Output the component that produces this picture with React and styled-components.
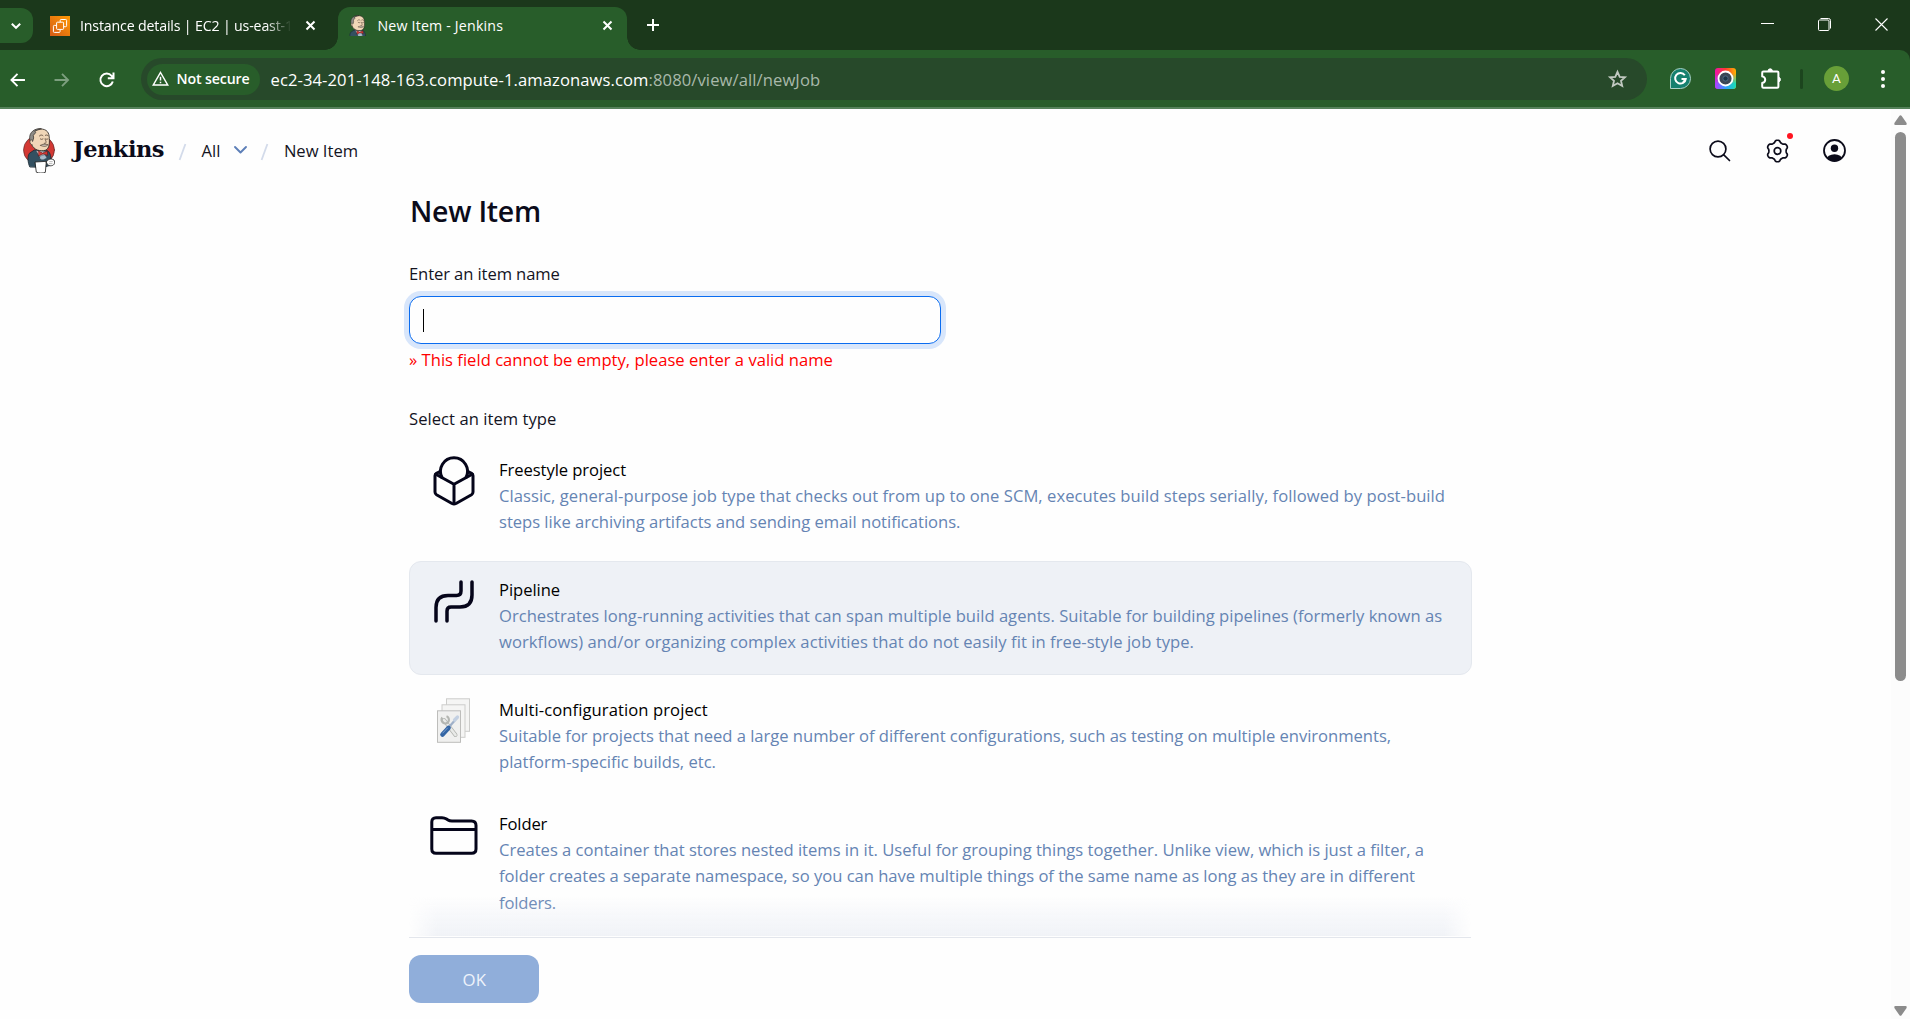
import React from "react";
import styled, { createGlobalStyle } from "styled-components";

const ink = "#14141f";
const Global = createGlobalStyle`
  * { box-sizing: border-box; }
  body { margin: 0; background: #fefefe; overflow: hidden; font-family: "Open Sans", "Noto Sans", sans-serif; }
  svg { display: block; flex: none; overflow: visible; }
`;

const Window = styled.div`
  display: flex;
  flex-direction: column;
  width: 1910px;
  height: 1019px;
  overflow: hidden;
  background: #1b381b;
`;

/* ---------- browser chrome ---------- */
const TabStrip = styled.div`
  display: flex;
  height: 50px;
  background: #1b381b;
  color: #fff;
`;
const TabSearch = styled.div`
  display: flex;
  align-items: center;
  justify-content: center;
  width: 33px;
  height: 35px;
  margin-top: 8px;
  padding-right: 2px;
  border-radius: 0 12px 12px 0;
  background: #285d2a;
`;
const Tab = styled.div`
  position: relative;
  display: flex;
  align-items: center;
  width: ${(p) => p.$w}px;
  margin-left: ${(p) => p.$ml}px;
  margin-top: 7px;
  padding: 0 ${(p) => p.$pr}px 6px ${(p) => p.$pl}px;
  border-radius: 12px 12px 0 0;
  background: ${(p) => (p.$active ? "#285d2a" : "transparent")};
  &::before, &::after {
    content: "";
    display: ${(p) => (p.$active ? "block" : "none")};
    position: absolute;
    bottom: 0;
    width: 13px;
    height: 13px;
  }
  &::before { left: -13px; background: radial-gradient(circle at 0 0, transparent 12.5px, #285d2a 13px); }
  &::after { right: -13px; background: radial-gradient(circle at 100% 0, transparent 12.5px, #285d2a 13px); }
`;
const TabTitle = styled.span`
  flex: 1;
  margin-left: ${(p) => p.$ml}px;
  margin-right: 10px;
  white-space: nowrap;
  font-size: 14.2px;
  line-height: 22px;
  letter-spacing: ${(p) => p.$ls}px;
  mask-image: ${(p) => (p.$fade ? "linear-gradient(to right, #000 86%, transparent 98%)" : "none")};
`;
const NewTab = styled.div`
  margin: 19px 0 0 20px;
`;
const WindowButtons = styled.div`
  display: flex;
  align-items: flex-start;
  gap: 44px;
  margin: 18px 22px 0 auto;
`;
const Toolbar = styled.div`
  display: flex;
  align-items: center;
  height: 59px;
  padding: 0 22px 0 10px;
  border-bottom: 2px solid #55825a;
  border-top-right-radius: 10px;
  background: #285d2a;
`;
const NavButtons = styled.div`
  display: flex;
  align-items: center;
  gap: 29px;
  width: 130.5px;
  margin-top: 2px;
`;
const AddressBar = styled.div`
  display: flex;
  align-items: center;
  width: 1506px;
  height: 42px;
  margin-top: 1px;
  padding: 0 19px 0 6px;
  border-radius: 21px;
  background: #27492a;
  color: #fff;
`;
const SecurityChip = styled.div`
  display: flex;
  align-items: center;
  gap: 7.5px;
  width: 113px;
  height: 31px;
  padding: 0 0 2px 5.5px;
  border-radius: 16px;
  background: #285d2a;
  font-size: 14.2px;
  font-weight: 600;
  letter-spacing: -0.15px;
  white-space: nowrap;
`;
const Url = styled.div`
  flex: 1;
  margin: 1px 0 0 11px;
  font-size: 16.6px;
  line-height: 26px;
  letter-spacing: 0.09px;
  white-space: nowrap;
`;
const UrlPath = styled.span`
  color: #a9b9aa;
`;
const Extensions = styled.div`
  display: flex;
  align-items: center;
  flex: 1;
  margin-left: 23px;
`;
const Divider = styled.div`
  width: 3px;
  height: 20px;
  margin: 0 21px 0 19px;
  border-radius: 2px;
  background: #1c451e;
`;
const ProfileBadge = styled.div`
  width: 25px;
  height: 25px;
  border-radius: 50%;
  background: #689f38;
  color: #fff;
  font: 13.5px/25px Roboto, sans-serif;
  text-align: center;
`;

/* ---------- page ---------- */
const Page = styled.div`
  display: flex;
  height: 910px;
  background: #fefefe;
`;
const Main = styled.div`
  position: relative;
  display: flex;
  flex-direction: column;
  flex: 1;
`;
const Header = styled.header`
  display: flex;
  align-items: center;
  height: 83px;
  padding: 0 45px 0 23px;
`;
const Brand = styled.span`
  margin: -4px 0 0 18px;
  width: 91px;
  color: #0b0b1a;
  font-family: "DejaVu Serif", serif;
  font-size: 22.5px;
  font-weight: 700;
  line-height: 30px;
  letter-spacing: -0.5px;
`;
const Crumb = styled.span`
  margin-left: ${(p) => p.$ml}px;
  color: ${ink};
  font-size: 16.6px;
  line-height: 26px;
  white-space: nowrap;
`;
const Slash = styled.svg`
  margin-left: ${(p) => p.$ml}px;
  margin-top: 2px;
`;
const HeaderActions = styled.div`
  position: relative;
  display: flex;
  align-items: center;
  gap: 34.5px;
  margin-left: auto;
`;
const Alert = styled.span`
  position: absolute;
  top: -5.5px;
  left: 77.5px;
  width: 6px;
  height: 6px;
  border-radius: 50%;
  background: #ff1420;
`;
const Form = styled.main`
  display: flex;
  flex-direction: column;
  flex: 1;
  width: 1063px;
  margin-left: 409px;
`;
const Title = styled.h1`
  margin: -1px 0 1px 1px;
  color: #0b0b1a;
  font-size: 28.5px;
  font-weight: 600;
  line-height: 40px;
  letter-spacing: -0.25px;
`;
const Label = styled.label`
  margin-top: ${(p) => p.$mt}px;
  color: ${ink};
  font-size: 16.6px;
  line-height: 26px;
  letter-spacing: ${(p) => p.$ls}px;
`;
const NameInput = styled.div`
  display: flex;
  align-items: center;
  width: 532px;
  height: 48px;
  margin-top: 9px;
  padding-left: 13px;
  border: 1.25px solid #0a6cf0;
  border-radius: 12px;
  background: #fefefe;
  box-shadow: 0 0 0 5px #d8e6fb;
`;
const Caret = styled.span`
  width: 1px;
  height: 23px;
  background: #000;
`;
const FieldError = styled.div`
  margin-top: 3px;
  color: #ff0000;
  font-size: 16.6px;
  line-height: 26px;
  letter-spacing: 0.01px;
`;
const Item = styled.div`
  display: flex;
  height: ${(p) => p.$h}px;
  margin-top: ${(p) => p.$mt}px;
  padding: 14px 0 0 15px;
  border: 1px solid ${(p) => (p.$hover ? "#e4e8ee" : "transparent")};
  border-radius: 12px;
  background: ${(p) => (p.$hover ? "#eef1f6" : "transparent")};
`;
const IconCell = styled.div`
  display: flex;
  justify-content: center;
  width: 57px;
  margin-right: 17px;
`;
const ItemTitle = styled.div`
  height: 27px;
  color: #000;
  font-size: 16.6px;
  line-height: 27px;
  letter-spacing: ${(p) => p.$ls}px;
`;
const DescLine = styled.div`
  color: #6584b3;
  font-size: 16.6px;
  line-height: 26.3px;
  letter-spacing: ${(p) => p.$ls}px;
  white-space: nowrap;
`;
const Footer = styled.footer`
  position: absolute;
  left: 409px;
  right: 420px;
  bottom: 0;
  height: 82px;
  padding-top: 17px;
  border-top: 1px solid #e3e6ec;
  background: #fefefe;
  &::before {
    content: "";
    position: absolute;
    left: 0;
    right: 0;
    top: -43px;
    height: 41px;
    background: linear-gradient(to bottom, rgba(225, 230, 240, 0), rgba(225, 230, 240, 0.45));
    mask-image: linear-gradient(to right, transparent, #000 28px, #000 1035px, transparent);
  }
`;
const OkButton = styled.button`
  display: flex;
  align-items: center;
  justify-content: center;
  width: 130px;
  height: 48px;
  padding: 0 0 0 1px;
  border: 0;
  border-radius: 12px;
  background: #90aeda;
  color: #eef3fb;
  font: 16.8px "Open Sans", sans-serif;
  letter-spacing: 0.4px;
`;
const ScrollTrack = styled.div`
  display: flex;
  flex-direction: column;
  align-items: center;
  width: 19px;
  padding: 6px 0 3px;
  background: #fcfcfc;
`;
const Thumb = styled.div`
  width: 11px;
  height: 549px;
  margin: 7px 0 auto;
  border-radius: 6px;
  background: #8b8b8b;
`;

/* ---------- drawings ---------- */
const Cross = ({ s = 9, w = 2 }) => (
  <svg width={s} height={s} viewBox={`0 0 ${s} ${s}`} stroke="#fff" strokeWidth={w} fill="none">
    <path d={`M.5 .5 ${s - 0.5} ${s - 0.5}M${s - 0.5} .5 .5 ${s - 0.5}`} />
  </svg>
);

const Butler = ({ w, h, box, disc = true }) => (
  <svg width={w} height={h} viewBox={box} style={{ overflow: "hidden" }} strokeLinejoin="round" strokeLinecap="round">
    {disc && <ellipse cx="48" cy="66" rx="46.5" ry="44" fill="#d33833" stroke="#5a2a2a" strokeWidth="2" />}
    <path d="M20 116C14 104 13 84 19 76L34 66 68 66C78 68 83 78 84 92L82 112 62 118Z" fill="#335061" stroke="#1d2b36" strokeWidth="2.5" />
    <path d="M40 68 56 96 72 72Z" fill="#f3f3f3" />
    <path d="M24 44C22 20 32 3 52 3 72 3 79 14 79 32 80 50 78 66 62 68 44 70 28 62 24 44Z" fill="#f0d6b7" stroke="#2a2622" strokeWidth="2.5" />
    <path d="M54 2C34 0 18 14 20 32L22 40 29 40 32 30 31 22 38 14 36 10Z" fill="#8d8b86" stroke="#2a2622" strokeWidth="2" />
    <path d="M27 36C19 32 18 50 27 50" fill="#f0d6b7" stroke="#2a2622" strokeWidth="2" />
    <path d="M49 24C52 20 57 20 60 23M67 22C70 20 74 20 76 24M52 33Q56 36 60 33M68 33Q71 35 75 33M66 33C70 42 72 46 64 46" fill="none" stroke="#4b3a2c" strokeWidth="2.2" />
    <path d="M53 52C59 47 67 48 75 50 72 56 60 57 53 52Z" fill="#cfc6ba" stroke="#4b3a2c" strokeWidth="2" />
    <path d="M46 69 59 75 73 69 74 82 60 78 47 84Z" fill="#d33833" stroke="#5e1719" strokeWidth="2" />
    <path d="M52 84 66 80 72 90 60 96 50 92Z" fill="#a9bccb" stroke="#31424f" strokeWidth="1.5" />
    <path d="M37 102 70 100 67 133C60 136 47 136 41 133Z" fill="#fff" stroke="#222" strokeWidth="2.5" />
    <path d="M70 102C74 94 84 90 93 96 97 104 94 112 86 113 78 115 72 110 70 102Z" fill="#fff" stroke="#222" strokeWidth="2.5" />
    <path d="M80 101 88 101M79 107 87 107" stroke="#777" strokeWidth="1.6" />
  </svg>
);

const Ec2Icon = () => (
  <svg width="20" height="20" viewBox="0 0 20 20">
    <defs>
      <linearGradient id="ec2" x1="0" y1="1" x2="1" y2="0">
        <stop offset="0" stopColor="#d45b16" />
        <stop offset="1" stopColor="#ff9a05" />
      </linearGradient>
    </defs>
    <rect width="20" height="20" fill="url(#ec2)" />
    <g fill="none" stroke="#fff" strokeWidth="1">
      <rect x="6.6" y="6.2" width="7" height="7.2" rx=".8" />
      <path d="M10.2 6V4.4q0-.9.9-.9h4.6q.9 0 .9.900v5.400q0 .9-.9.9h-1.900M6.600 9.400H4.300q-.9 0-.9.9v5.200q0 .9.9.9h4.900q.9 0 .9-.9v-1.900" />
    </g>
  </svg>
);

const Warning = () => (
  <svg width="17" height="15" viewBox="0 0 17 15" fill="none" stroke="#fff" strokeWidth="1.5">
    <path d="M8.500 1.500 15.700 14H1.300Z" />
    <path d="M8.500 5.800v3.700M8.500 10.700v1.500" />
  </svg>
);

const Cube = () => (
  <svg width="42" height="50" viewBox="0 0 42 50" fill="none" stroke="#05051a" strokeWidth="3" strokeLinejoin="round" strokeLinecap="round">
    <path d="M7 15.500 3.400 17.300Q2 18 2 19.700V36q0 1.800 1.500 2.700L19 47.500q2 1 4 0l15.500-8.800Q40 37.800 40 36V19.700q0-1.700-1.400-2.400L35 15.500" />
    <path d="M2.800 18.200 21 28.300 39.200 18.200M21 28.300V47.500" />
    <path d="M9 21.500A13.500 13.500 0 1 1 33 21.500" />
    <path d="M6.500 16 8.500 21M35.500 16 33.500 21" strokeWidth="1.600" />
  </svg>
);

const Pipes = () => (
  <svg width="40" height="43" viewBox="0 0 40 43" fill="none" stroke="#05051a" strokeWidth="3.500" strokeLinecap="round" strokeLinejoin="round">
    <path d="M2 41V27.500Q2 15.500 14 15.500H22.500Q27 15.500 27 11V2" />
    <path d="M13 41V31Q13 27 17 27H26Q38 27 38 15V2" />
  </svg>
);

const Sheets = () => (
  <svg width="33" height="45" viewBox="0 0 33 45">
    <g fill="#f5f5f4" stroke="#cdcdcb" strokeWidth="1">
      <rect x="9.500" y=".8" width="23" height="32.500" />
      <rect x="5" y="6.800" width="23" height="32.500" />
      <rect x=".5" y="12.800" width="23" height="31.500" fill="#f0f0ef" stroke="#bdbdbb" />
    </g>
    <path d="M7 22 18.500 37" stroke="#b0b2ae" strokeWidth="4" strokeLinecap="round" />
    <path d="M7 22 18.500 37" stroke="#e9eae8" strokeWidth="2.600" strokeLinecap="round" />
    <path d="M5.300 19.500A3.700 3.700 0 1 0 9.500 18.300" fill="none" stroke="#b4b6b2" strokeWidth="2.200" />
    <path d="M12 29 20 20" stroke="#9fb0c8" strokeWidth="2.200" strokeLinecap="round" />
    <path d="M17.500 22 20.500 19" stroke="#c3d0e2" strokeWidth="3.200" strokeLinecap="round" />
    <path d="M5.500 36.500 11.500 30" stroke="#3465a4" strokeWidth="4.600" strokeLinecap="round" />
    <path d="M5.800 35 10.500 30" stroke="#7a9fd0" strokeWidth="1" strokeLinecap="round" />
  </svg>
);

const FolderIcon = () => (
  <svg width="48" height="39" viewBox="0 0 48 39" fill="none" stroke="#05051a" strokeWidth="3" strokeLinejoin="round">
    <path d="M1.800 33V6Q1.800 1.700 6 1.700H12Q14.500 1.700 16.500 3L18 4Q19.500 5 22 5H41.500Q46 5 46 9.500V33Q46 37.300 41.700 37.300H6Q1.800 37.300 1.800 33Z" />
    <path d="M2 13.500H46" />
  </svg>
);

/* Six-lobed gear outline, lobes at the top and bottom */
const gearPath = Array.from({ length: 120 }, (_, i) => {
  const a = (i / 120) * Math.PI * 2;
  const wave = Math.cos(6 * (a - Math.PI / 2));
  const r = 9.7 + 1.15 * Math.tanh(1.6 * wave);
  return `${i ? "L" : "M"}${(11.5 + r * Math.cos(a)).toFixed(2)} ${(12 + r * Math.sin(a)).toFixed(2)}`;
}).join("") + "Z";

const items = [
  {
    title: "Freestyle project", ls: -0.07, mt: 9, h: 114, icon: <Cube />, iconTop: 0,
    lines: [
      ["Classic, general-purpose job type that checks out from up to one SCM, executes build steps serially, followed by post-build", 0.041],
      ["steps like archiving artifacts and sending email notifications.", -0.025],
    ],
  },
  {
    title: "Pipeline", ls: -0.06, mt: 6, h: 114, hover: true, icon: <Pipes />, iconTop: 4,
    lines: [
      ["Orchestrates long-running activities that can span multiple build agents. Suitable for building pipelines (formerly known as", 0.007],
      ["workflows) and/or organizing complex activities that do not easily fit in free-style job type.", 0.049],
    ],
  },
  {
    title: "Multi-configuration project", ls: 0.08, mt: 6, h: 108, icon: <Sheets />, iconTop: 2,
    lines: [
      ["Suitable for projects that need a large number of different configurations, such as testing on multiple environments,", -0.026],
      ["platform-specific builds, etc.", 0],
    ],
  },
  {
    title: "Folder", ls: -0.12, mt: 6, h: 140, icon: <FolderIcon />, iconTop: 6,
    lines: [
      ["Creates a container that stores nested items in it. Useful for grouping things together. Unlike view, which is just a filter, a", -0.015],
      ["folder creates a separate namespace, so you can have multiple things of the same name as long as they are in different", -0.029],
      ["folders.", -0.15],
    ],
  },
];

const IconOffset = styled.div`
  margin-top: ${(p) => p.$top}px;
`;

export default function App() {
  return (
    <Window>
      <Global />
      <TabStrip>
        <TabSearch>
          <svg width="10" height="6" viewBox="0 0 10 6" fill="none" stroke="#fff" strokeWidth="2"><path d="M.8 .8 5 4.800 9.200 .8" /></svg>
        </TabSearch>
        <Tab $w={291} $ml={0} $pl={17} $pr={9}>
          <Ec2Icon />
          <TabTitle $ml={10} $ls={-0.169} $fade>Instance details | EC2 | us-east-1</TabTitle>
          <Cross />
        </Tab>
        <Tab $w={289} $ml={14} $pl={11} $pr={15.5} $active>
          <Butler w={18} h={21} box="17 0 68 92" disc={false} />
          <TabTitle $ml={10.5} $ls={0.18}>New Item - Jenkins</TabTitle>
          <Cross />
        </Tab>
        <NewTab>
          <svg width="12" height="12" viewBox="0 0 12 12" stroke="#fff" strokeWidth="2"><path d="M6 0V12M0 6H12" /></svg>
        </NewTab>
        <WindowButtons>
          <svg width="13" height="13" viewBox="0 0 13 13" stroke="#fff"><path d="M0 5.500H13" /></svg>
          <svg width="13" height="13" viewBox="0 0 13 13" stroke="#fff" fill="none">
            <rect x=".5" y="2" width="10.500" height="10.500" rx="1" />
            <path d="M2.500 .5H10.500Q12.500 .5 12.500 2.500V10.500" />
          </svg>
          <Cross s={13} w={1.1} />
        </WindowButtons>
      </TabStrip>

      <Toolbar>
        <NavButtons>
          <svg width="15" height="14" viewBox="0 0 16 15" fill="none" stroke="#fff" strokeWidth="2"><path d="M16 7.500H2M8 1 1.500 7.500 8 14" /></svg>
          <svg width="16" height="14" viewBox="0 0 16 15" fill="none" stroke="#7d9f7f" strokeWidth="2"><path d="M0 7.500H14M8 1 14.500 7.500 8 14" /></svg>
          <svg width="16" height="16" viewBox="0 0 16 16" fill="none" stroke="#fff" strokeWidth="2"><path d="M13.800 9.500A6.300 6.300 0 1 1 12.600 3.800L14 5.500M14.500 .5V6.200H8.800" /></svg>
        </NavButtons>
        <AddressBar>
          <SecurityChip><Warning />Not secure</SecurityChip>
          <Url>ec2-34-201-148-163.compute-1.amazonaws.com<UrlPath>:8080/view/all/newJob</UrlPath></Url>
          <svg width="21" height="20" viewBox="0 0 21 20" fill="none" stroke="#c2c9c2" strokeWidth="1.800" strokeLinejoin="miter">
            <path d="M10.500 2.800 12.700 7.800 18 8.300 14 11.800 15.200 17 10.500 14.200 5.800 17 7 11.800 3 8.300 8.300 7.800Z" />
          </svg>
        </AddressBar>
        <Extensions>
          <svg width="21" height="21" viewBox="0 0 21 21" fill="none">
            <path d="M.5 20.500V10.500A10 10 0 1 1 10.500 20.500Z" fill="#15806f" stroke="#a9d0c6" strokeWidth="1" />
            <path d="M14.800 7.200A5.300 5.300 0 1 0 15.700 11H11.500M13 14.500 15.700 11" stroke="#fff" strokeWidth="2" />
          </svg>
          <svg width="21" height="21" viewBox="0 0 21 21" style={{ marginLeft: 24 }}>
            <defs>
              <linearGradient id="camA" x1="0" y1="0" x2="1" y2="0">
                <stop offset="0" stopColor="#f012a8" /><stop offset=".5" stopColor="#ff3b30" /><stop offset="1" stopColor="#ffb400" />
              </linearGradient>
              <linearGradient id="camB" x1="0" y1="0" x2="1" y2="0">
                <stop offset="0" stopColor="#b43cff" /><stop offset=".5" stopColor="#2f9dff" /><stop offset="1" stopColor="#19e0b0" />
              </linearGradient>
              <linearGradient id="camM" x1="0" y1="0" x2="0" y2="1">
                <stop offset=".25" stopColor="#fff" stopOpacity="0" /><stop offset=".75" stopColor="#fff" />
              </linearGradient>
              <mask id="camMask"><rect width="21" height="21" fill="url(#camM)" /></mask>
            </defs>
            <rect width="21" height="21" rx="3" fill="url(#camA)" />
            <rect width="21" height="21" rx="3" fill="url(#camB)" mask="url(#camMask)" />
            <circle cx="10.500" cy="10.500" r="7" fill="#3b4654" stroke="#fff" strokeWidth="1.800" />
            <circle cx="10.500" cy="10.500" r="2.600" fill="#1d3445" stroke="#54708a" strokeWidth=".8" />
          </svg>
          <svg width="20" height="21" viewBox="0 0 20 21" fill="none" stroke="#fff" strokeWidth="2" strokeLinejoin="round" style={{ marginLeft: 25.5 }}>
            <path d="M1.200 4.700Q1.200 3.500 2.400 3.500H16.200Q17.400 3.500 17.400 4.700V18.600Q17.400 19.800 16.200 19.800H2.400Q1.200 19.800 1.200 18.600V15Q4.200 14.300 4.200 11.700T1.200 8.400Z" />
            <path d="M7 3.200A2.200 2.400 0 0 1 11.400 3.200ZM17.700 9.300A2.200 2.300 0 0 1 17.700 13.800Z" fill="#fff" strokeWidth="1" />
          </svg>
          <Divider />
          <ProfileBadge>A</ProfileBadge>
          <svg width="4" height="20" viewBox="0 0 4 20" fill="#fff" style={{ marginLeft: "auto", marginRight: 3.5 }}>
            <circle cx="2" cy="3" r="2" /><circle cx="2" cy="10" r="2" /><circle cx="2" cy="17" r="2" />
          </svg>
        </Extensions>
      </Toolbar>

      <Page>
        <Main>
          <Header>
            <Butler w={32} h={45} box="0 0 96 135" />
            <Brand>Jenkins</Brand>
            <Slash $ml={15} width="7" height="16" viewBox="0 0 7 16" stroke="#d3dbea" strokeWidth="1.800"><path d="M.6 16 6.400 0" /></Slash>
            <Crumb $ml={15.5}>All</Crumb>
            <svg width="13" height="8" viewBox="0 0 13 8" fill="none" stroke="#5d7fb8" strokeWidth="1.900" strokeLinecap="round" strokeLinejoin="round" style={{ marginLeft: 14, marginTop: -1 }}>
              <path d="M1 1 6.500 6.500 12 1" />
            </svg>
            <Slash $ml={14} width="7" height="16" viewBox="0 0 7 16" stroke="#d3dbea" strokeWidth="1.800"><path d="M.6 16 6.400 0" /></Slash>
            <Crumb $ml={15.5}>New Item</Crumb>
            <HeaderActions>
              <svg width="22" height="22" viewBox="0 0 22 22" fill="none" stroke="#0b0b1a" strokeWidth="1.700" strokeLinecap="round">
                <circle cx="9" cy="9" r="7.900" /><path d="M14.800 14.800 20.500 20.500" />
              </svg>
              <svg width="23" height="24" viewBox="0 0 23 24" fill="none" stroke="#0b0b1a" strokeWidth="1.700" strokeLinejoin="round">
                <circle cx="11.500" cy="12" r="3.300" />
                <path d={gearPath} />
              </svg>
              <Alert />
              <svg width="23" height="23" viewBox="0 0 23 23">
                <defs><clipPath id="disc"><circle cx="11.500" cy="11.500" r="10.500" /></clipPath></defs>
                <circle cx="11.500" cy="11.500" r="10.500" fill="none" stroke="#0b0b1a" strokeWidth="1.800" />
                <circle cx="11.500" cy="9.300" r="3.700" fill="#0b0b1a" />
                <ellipse cx="11.500" cy="20.500" rx="8" ry="5.300" fill="#0b0b1a" clipPath="url(#disc)" />
              </svg>
            </HeaderActions>
          </Header>

          <Form>
            <Title>New Item</Title>
            <Label $mt={29} $ls={-0.1}>Enter an item name</Label>
            <NameInput><Caret /></NameInput>
            <FieldError>» This field cannot be empty, please enter a valid name</FieldError>
            <Label $mt={33} $ls={0.04}>Select an item type</Label>
            {items.map((it) => (
              <Item key={it.title} $h={it.h} $mt={it.mt} $hover={it.hover}>
                <IconCell><IconOffset $top={it.iconTop}>{it.icon}</IconOffset></IconCell>
                <div>
                  <ItemTitle $ls={it.ls}>{it.title}</ItemTitle>
                  {it.lines.map(([text, ls]) => <DescLine key={text} $ls={ls}>{text}</DescLine>)}
                </div>
              </Item>
            ))}
          </Form>
          <Footer><OkButton>OK</OkButton></Footer>
        </Main>
        <ScrollTrack>
          <svg width="13" height="10" viewBox="0 0 13 10" fill="#8b8b8b"><path d="M5.300 1.100Q6.500-.6 7.700 1.100L12.600 8Q13.400 10 11.600 10H1.400Q-.4 10 .4 8Z" /></svg>
          <Thumb />
          <svg width="13" height="10" viewBox="0 0 13 10" fill="#8b8b8b"><path d="M5.300 8.900Q6.500 10.600 7.700 8.900L12.600 2Q13.400 0 11.600 0H1.400Q-.4 0 .4 2Z" /></svg>
        </ScrollTrack>
      </Page>
    </Window>
  );
}
